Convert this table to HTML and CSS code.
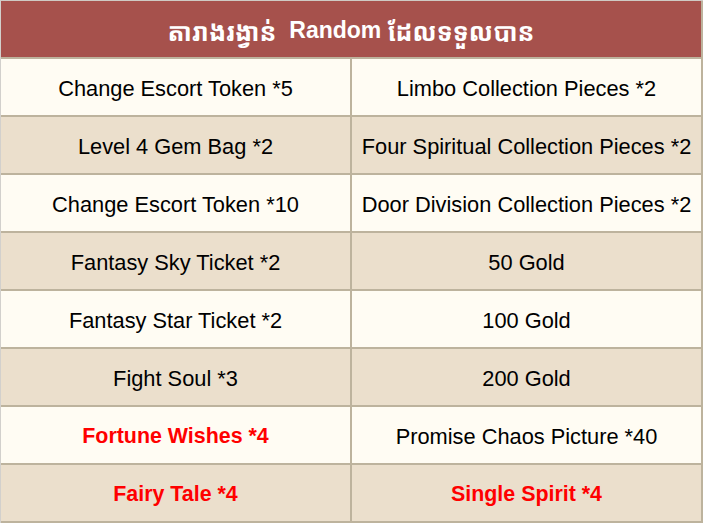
FILE: index.html
```html
<!DOCTYPE html>
<html lang="km">
<head>
<meta charset="utf-8">
<title>Random Rewards</title>
<link rel="stylesheet" href="styles.css">
</head>
<body>
<div class="table">
  <div class="head"><span class="km">តារាងរង្វាន់</span>  Random <span class="km">ដែលទទួលបាន</span></div>
  <div class="cell light">Change Escort Token *5</div>
  <div class="cell light">Limbo Collection Pieces *2</div>
  <div class="cell dark">Level 4 Gem Bag *2</div>
  <div class="cell dark">Four Spiritual Collection Pieces *2</div>
  <div class="cell light">Change Escort Token *10</div>
  <div class="cell light">Door Division Collection Pieces *2</div>
  <div class="cell dark">Fantasy Sky Ticket *2</div>
  <div class="cell dark">50 Gold</div>
  <div class="cell light">Fantasy Star Ticket *2</div>
  <div class="cell light">100 Gold</div>
  <div class="cell dark">Fight Soul *3</div>
  <div class="cell dark">200 Gold</div>
  <div class="cell light hot">Fortune Wishes *4</div>
  <div class="cell light">Promise Chaos Picture *40</div>
  <div class="cell dark hot">Fairy Tale *4</div>
  <div class="cell dark hot">Single Spirit *4</div>
</div>
</body>
</html>
```
FILE: styles.css
```css
html, body {
  margin: 0;
  padding: 0;
  background: #ffffff;
}
.table {
  width: 703px;
  height: 523px;
  box-sizing: border-box;
  display: grid;
  grid-template-columns: 349px 349px;
  grid-template-rows: 56px repeat(8, 56px);
  gap: 2px;
  padding: 0 2px 2px 0;
  border-left: 1px solid #d2d0cc;
  border-top: 1px solid #cfcac4;
  background: #bdb39d;
  font-family: "Liberation Sans", Arial, sans-serif;
  font-size: 21.8px;
  color: #000;
}
.head {
  grid-column: 1 / 3;
  background: #a6514c;
  color: #ffffff;
  font-weight: bold;
  font-size: 23px;
  display: flex;
  align-items: center;
  justify-content: center;
  padding-top: 3px;
  font-family: "Liberation Sans", "Noto Sans Khmer", "Khmer OS", "Khmer OS System", sans-serif;
  white-space: pre;
}
.km {
  font-size: 25px;
}
.cell {
  display: flex;
  align-items: center;
  justify-content: center;
  white-space: nowrap;
  padding-top: 3px;
}
.light { background: #fffcf3; }
.dark { background: #ebdfcc; }
.hot {
  color: #ff0000;
  font-weight: bold;
  font-size: 21.4px;
}
```
